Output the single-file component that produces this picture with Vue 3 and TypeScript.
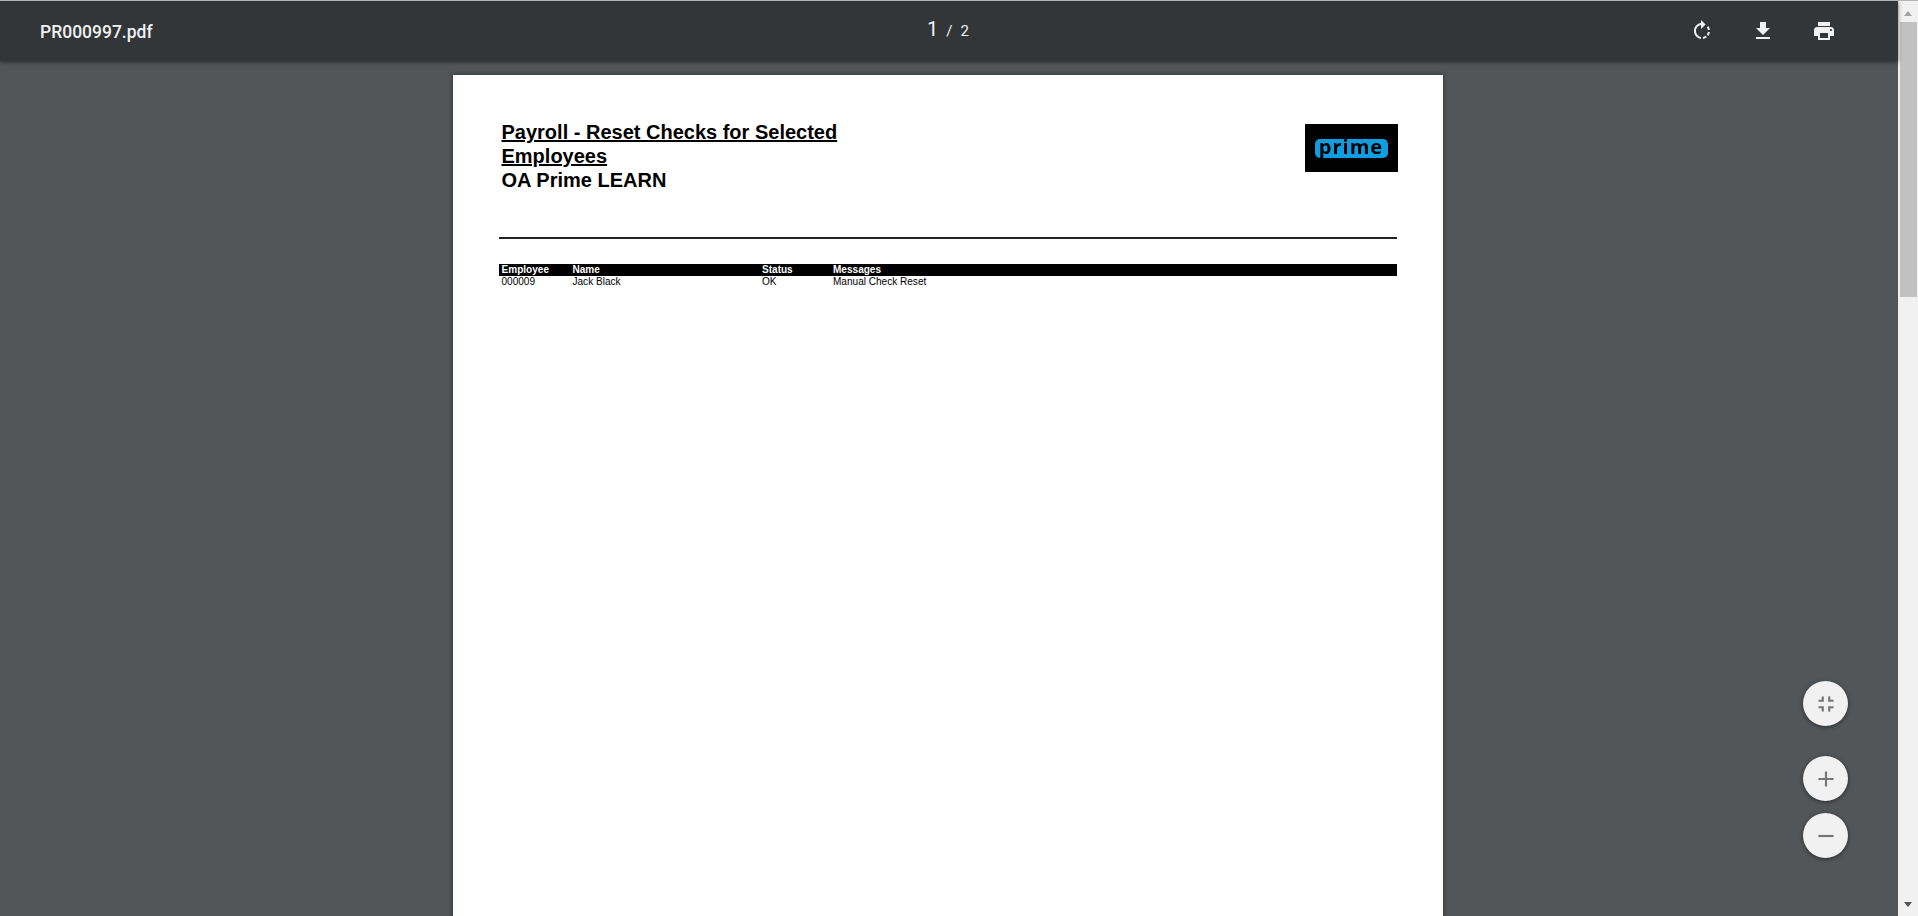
<script setup lang="ts">
interface Row { id: string; name: string; status: string; message: string }
const rows: Row[] = [{ id: '000009', name: 'Jack Black', status: 'OK', message: 'Manual Check Reset' }]
</script>

<template>
  <div class="app">
    <div class="viewer">
      <header class="toolbar">
        <div class="filename">PR000997.pdf</div>
        <div class="pager"><span class="cur">1</span><span class="sep">/</span><span class="tot">2</span></div>
        <div class="actions">
          <svg class="icon" viewBox="0 0 24 24" fill="#f1f1f1"><path d="M15.55 5.55L11 1v3.07C7.06 4.56 4 7.92 4 12s3.05 7.44 7 7.93v-2.02c-2.84-.48-5-2.94-5-5.91s2.16-5.43 5-5.91V10l4.55-4.45zM19.93 11c-.17-1.39-.72-2.73-1.62-3.89l-1.42 1.42c.54.75.88 1.6 1.02 2.47h2.02zM13 17.9v2.02c1.39-.17 2.74-.71 3.9-1.61l-1.44-1.44c-.75.54-1.59.89-2.46 1.03zm3.89-2.42l1.42 1.41c.9-1.16 1.45-2.5 1.62-3.89h-2.02c-.14.88-.49 1.72-1.02 2.48z"/></svg>
          <svg class="icon" viewBox="0 0 24 24" fill="#f1f1f1"><path d="M19 9h-4V3H9v6H5l7 7 7-7zM5 18v2h14v-2H5z"/></svg>
          <svg class="icon" viewBox="0 0 24 24" fill="#f1f1f1"><path d="M19 8H5c-1.66 0-3 1.34-3 3v6h4v4h12v-4h4v-6c0-1.66-1.34-3-3-3zm-3 11H8v-5h8v5zm3-7c-.55 0-1-.45-1-1s.45-1 1-1 1 .45 1 1-.45 1-1 1zm-1-9H6v4h12V3z"/></svg>
        </div>
      </header>
      <main class="canvas">
        <article class="page">
          <div class="head">
            <div class="titles">
              <div class="title"><u>Payroll - Reset Checks for Selected Employees</u></div>
              <div class="title">OA Prime LEARN</div>
            </div>
            <div class="logo">
              <div class="badge"><span>prime</span></div>
            </div>
          </div>
          <div class="rule"></div>
          <div class="table">
            <div class="tr th"><span>Employee</span><span>Name</span><span>Status</span><span>Messages</span></div>
            <div v-for="r in rows" :key="r.id" class="tr"><span>{{ r.id }}</span><span>{{ r.name }}</span><span>{{ r.status }}</span><span>{{ r.message }}</span></div>
          </div>
        </article>
      </main>
      <div class="fabs">
        <button class="fab fit"><svg viewBox="0 0 24 24" width="26" height="26" fill="#757575"><path d="M5 16h3v3h2v-5H5v2zm3-8H5v2h5V5H8v3zm6 11h2v-3h3v-2h-5v5zm2-11V5h-2v5h5V8h-3z"/></svg></button>
        <button class="fab plus"><svg viewBox="0 0 24 24" width="26" height="26" fill="#757575"><path d="M19 13h-6v6h-2v-6H5v-2h6V5h2v6h6v2z"/></svg></button>
        <button class="fab"><svg viewBox="0 0 24 24" width="26" height="26" fill="#757575"><path d="M19 13H5v-2h14v2z"/></svg></button>
      </div>
    </div>
    <aside class="scrollbar">
      <div class="arrow up"></div>
      <div class="track"><div class="thumb"></div></div>
      <div class="arrow down"></div>
    </aside>
  </div>
</template>

<style>
html, body { margin: 0; overflow: hidden; }
</style>

<style scoped>
.app { display: flex; width: 1918px; height: 916px; box-sizing: border-box; border-top: 1px solid #b4b4b4; overflow: hidden; font-family: "Liberation Sans", Arial, sans-serif; }
.viewer { position: relative; width: 1898px; display: flex; flex-direction: column; background: #525659; }
.toolbar {
  position: relative; z-index: 2; height: 60px; flex: none; padding: 0 40px; background: #323639;
  box-shadow: 0 1px 4px rgba(0,0,0,.55); display: grid; grid-template-columns: 1fr auto 1fr; align-items: center; color: #f1f1f1;
}
.filename { font: 500 17.5px Roboto, sans-serif; padding-top: 1px; }
.pager { display: flex; align-items: baseline; gap: 8px; font-family: Roboto, sans-serif; padding-bottom: 5px; padding-right: 2px; }
.cur { font-size: 20px; }
.sep, .tot { font-size: 15px; }
.actions { display: flex; justify-content: flex-end; gap: 37px; padding-right: 22px; }
.icon { width: 24px; height: 24px; display: block; }
.canvas { flex: 1; min-height: 0; overflow: hidden; display: flex; justify-content: center; align-items: flex-start; padding-top: 14px; padding-right: 3px; }
.page { width: 990px; height: 1280px; flex: none; background: #fff; box-shadow: 0 0 4px rgba(0,0,0,.5); color: #000; box-sizing: border-box; padding: 45px 46px 0 46px; }
.head { display: flex; justify-content: space-between; align-items: flex-start; height: 117px; padding-left: 3px; }
.titles { width: 360px; }
.title { font-size: 20px; font-weight: 700; line-height: 24px; }
.logo { width: 93px; height: 48px; margin-top: 4px; margin-right: -1px; background: #000; display: flex; align-items: center; justify-content: center; filter: blur(.3px); }
.badge { width: 73px; height: 19px; background: #0e9de0; border-radius: 5px; display: flex; justify-content: center; align-items: center; }
.badge span { font-family: "Open Sans", sans-serif; font-size: 20px; font-weight: 700; color: #000; line-height: 19px; margin-top: -4px; letter-spacing: 1px; }
.rule { height: 2px; background: #222; }
.table { margin-top: 25px; font-size: 10.05px; }
.tr { display: grid; grid-template-columns: 71px 189.5px 71px 1fr; height: 12px; line-height: 12px; padding-left: 3px; }
.th { background: #000; color: #fff; font-weight: 700; }
.fabs { position: absolute; right: 50px; top: 680px; z-index: 3; display: flex; flex-direction: column; }
.fab { width: 45px; height: 45px; border-radius: 50%; border: 0; padding: 0; background: #f1f1f1; box-shadow: 0 1px 4px rgba(0,0,0,.5); display: flex; align-items: center; justify-content: center; margin-bottom: 12px; }
.fit { margin-bottom: 30px; }
.scrollbar { width: 20px; flex: none; background: #f1f1f1; display: flex; flex-direction: column; align-items: center; }
.arrow { height: 21px; box-sizing: border-box; flex: none; width: 100%; display: flex; align-items: center; justify-content: center; }
.arrow::after { content: ""; border-left: 4.5px solid transparent; border-right: 4.5px solid transparent; }
.up { padding-top: 3px; }
.down { padding-bottom: 3px; }
.up::after { border-bottom: 5px solid #a3a3a3; }
.down::after { border-top: 5px solid #505050; }
.track { flex: 1; width: 100%; padding: 0 1px 0 2px; box-sizing: border-box; }
.thumb { height: 275px; background: #c1c1c1; }
</style>
